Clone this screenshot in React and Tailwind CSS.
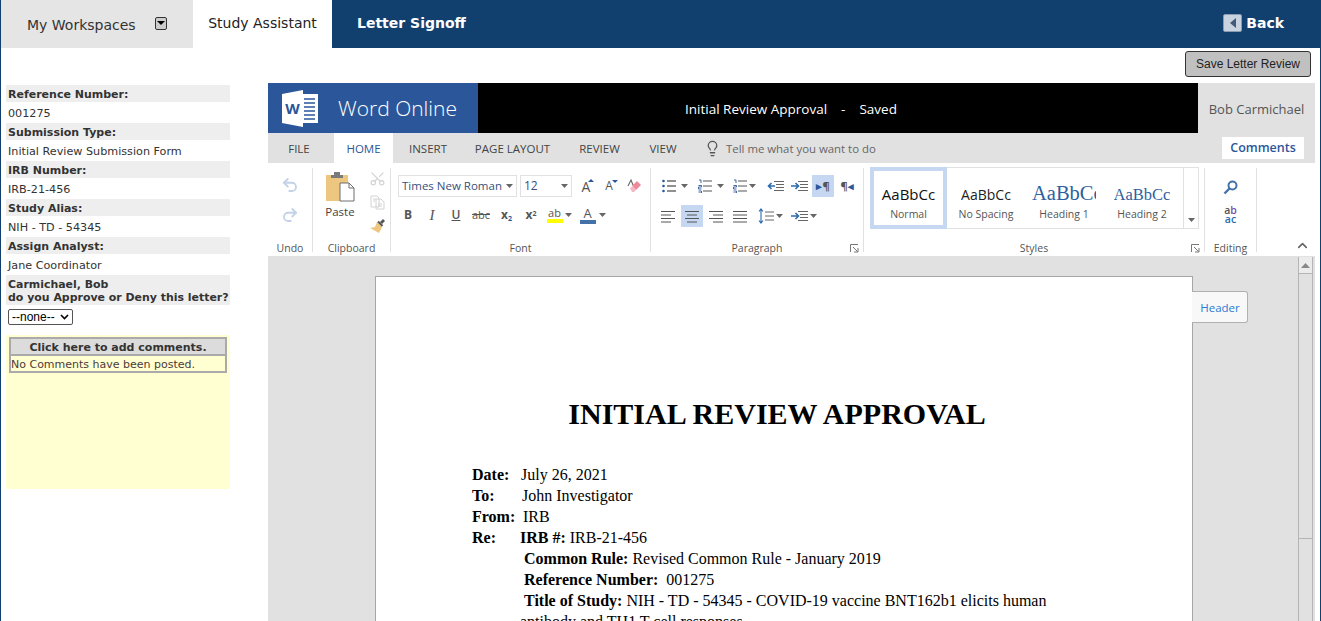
import React from 'react';
import { Lightbulb, Scissors, Undo2, Redo2, ChevronUp } from 'lucide-react';

const UI = "font-['Open_Sans',sans-serif]";

const studyInfo = [
  { label: 'Reference Number:', value: '001275' },
  { label: 'Submission Type:', value: 'Initial Review Submission Form' },
  { label: 'IRB Number:', value: 'IRB-21-456' },
  { label: 'Study Alias:', value: 'NIH - TD - 54345' },
  { label: 'Assign Analyst:', value: 'Jane Coordinator' },
];

const Caret = ({ className = '' }) => (
  <svg width="7" height="4" viewBox="0 0 7 4" className={className}><path d="M0 0h7L3.5 4z" fill="#666" /></svg>
);

// four horizontal strokes, used by every align button
const Lines = ({ widths, align = 'left', color = '#555', x = 0 }) => (
  <>
    {widths.map((w, i) => {
      const start = align === 'left' ? x : align === 'right' ? x + 14 - w : x + (14 - w) / 2;
      return <path key={i} d={`M${start} ${2.5 + i * 3.5}h${w}`} stroke={color} strokeWidth="1" />;
    })}
  </>
);

const AlignIcon = ({ widths, align }) => (
  <svg width="14" height="14" viewBox="0 0 14 14"><Lines widths={widths} align={align} /></svg>
);

const ParaCell = ({ width, active, className = '', children }) => (
  <div className={`h-[22px] flex items-center justify-center shrink-0 ${width} ${active ? 'bg-[#c5d7f1]' : ''} ${className}`}>
    {children}
  </div>
);

const ListIcon = ({ kind }) => (
  <svg width="15" height="14" viewBox="0 0 15 14">
    {kind === 'bullet' && <><circle cx="1.5" cy="2" r="1.3" fill="#2b579a" /><circle cx="1.5" cy="7" r="1.3" fill="#2b579a" /><circle cx="1.5" cy="12" r="1.3" fill="#2b579a" /></>}
    {kind !== 'bullet' && <><path d="M1 1h2v3M0.5 6.5h3v1.5h-3v2h3M0.5 12h3v2h-3" fill="none" stroke="#2b579a" strokeWidth=".9" /></>}
    <path d="M5 2h9M5 7h9M5 12h9" stroke={kind === 'bullet' ? '#222' : '#555'} strokeWidth="1" />
  </svg>
);

const IndentIcon = ({ out }) => (
  <svg width="17" height="12" viewBox="0 0 17 12">
    <path d="M7 1.5h10M9 4.5h8M9 7.5h8M7 10.5h10" stroke="#666" strokeWidth="1" />
    {out ? <path d="M8 6H2M4.5 3 1.5 6l3 3" fill="none" stroke="#2b6cb0" strokeWidth="1.6" /> : <path d="M0 6h7M4.5 3l3 3-3 3" fill="none" stroke="#2b6cb0" strokeWidth="1.6" />}
  </svg>
);

const RibbonGroup = ({ width, label, launcher, children }) => (
  <div className={`${width} mt-[5px] h-[84px] border-r border-[#e1e1e1] flex flex-col shrink-0`}>
    <div className="h-[73px]">{children}</div>
    <div className="h-[11px] relative text-center text-[10.5px] leading-[14px] text-[#555]">
      {label}
      {launcher && (
        <svg width="9" height="9" viewBox="0 0 9 9" className="absolute right-[4px] top-[3px]">
          <path d="M.5 8V.5H8M3 3l4.5 4.5M4 8h4V4" fill="none" stroke="#777" strokeWidth="1" />
        </svg>
      )}
    </div>
  </div>
);

const StyleSample = ({ className, sample, name }) => (
  <div className="w-[78px] h-full flex flex-col items-center overflow-hidden shrink-0">
    <div className={`h-[37px] flex items-end overflow-hidden whitespace-nowrap ${className}`}>{sample}</div>
    <div className="mt-[2px] text-[10.5px] leading-[14px] text-[#555]">{name}</div>
  </div>
);

const FontButton = ({ width, children, className = '' }) => (
  <div className={`${width} h-[22px] flex items-center justify-center shrink-0 text-[#555] ${className}`}>{children}</div>
);

const Ribbon = () => (
  <div className={`h-[93px] bg-white flex ${UI}`}>
    <RibbonGroup width="w-[45px]" label="Undo">
      <div className="flex flex-col items-center pt-[8px] gap-[12px]">
        <Undo2 size={18} color="#c3d2e6" strokeWidth={2.4} />
        <Redo2 size={18} color="#c3d2e6" strokeWidth={2.4} />
      </div>
    </RibbonGroup>

    <RibbonGroup width="w-[78px]" label="Clipboard">
      <div className="flex pl-[11px] pt-[3px]">
        <div className="w-[32px] flex flex-col items-center">
          <svg width="30" height="31" viewBox="0 0 30 31">
            <path d="M1 4h22v26H1z" fill="#edc77f" />
            <path d="M9 4V1h6v3h3v3H6V4z" fill="#7a7a7a" />
            <path d="M15 12h9l5 5v13H15z" fill="#fff" stroke="#6e6e6e" strokeWidth="1" />
            <path d="M24 12v5h5" fill="none" stroke="#6e6e6e" strokeWidth="1" />
          </svg>
          <span className="mt-[2px] text-[11.5px] leading-[15px] text-[#444]">Paste</span>
        </div>
        <div className="ml-[13px] -mt-[1px] flex flex-col items-center gap-[8px]">
          <Scissors size={17} color="#d2d2d2" strokeWidth={1.6} className="-rotate-90" />
          <svg width="15" height="15" viewBox="0 0 15 15"><path d="M1 1h6l2 2v9H1zM6 4h5l3 3v7H6z" fill="#fff" stroke="#d2d2d2" /><path d="M3 4h3M3 6h2M8 9h4M8 11h4" stroke="#d2d2d2" /></svg>
          <svg width="16" height="16" viewBox="0 0 16 16"><path d="M10 4l3-3 2 2-3 3z" fill="#555" /><path d="M7 4l5 5-3 6-9-5 5-1z" fill="#edc77f" /><path d="M8 3.5l4.5 4.5" stroke="#555" strokeWidth="2" /></svg>
        </div>
      </div>
    </RibbonGroup>

    <RibbonGroup width="w-[260px]" label="Font">
      <div className="pl-[5px] pt-[7px]">
        <div className="flex items-center h-[22px]">
          <div className="ml-[2px] w-[119px] h-[22px] border border-[#e1e1e1] flex items-center justify-between px-[3px] text-[12px] text-[#2b579a]">
            <span className="whitespace-nowrap text-[11.5px] text-[#37517a]">Times New Roman</span><Caret />
          </div>
          <div className="ml-[3px] w-[52px] h-[22px] border border-[#e1e1e1] flex items-center justify-between px-[3px] text-[12px] text-[#37517a]">
            <span>12</span><Caret />
          </div>
          <FontButton width="w-[24px] ml-[2px]">
            <span className="text-[14px] relative">A<span className="absolute -right-[4px] top-[3px] w-0 h-0 border-x-[3px] border-x-transparent border-b-[3px] border-b-[#2b579a]" /></span>
          </FontButton>
          <FontButton width="w-[22px]">
            <span className="text-[12px] relative">A<span className="absolute -right-[5px] top-[3px] w-0 h-0 border-x-[3px] border-x-transparent border-t-[3px] border-t-[#2b579a]" /></span>
          </FontButton>
          <FontButton width="w-[24px] ml-[2px]">
            <svg width="15" height="15" viewBox="0 0 15 15"><path d="M5 7l5-5 4 4-5 5z" fill="#ec8a9c" /><path d="M3 9l3-2 3 4-2 2H5z" fill="#f4b8c4" /><path d="M1 7l3-6 2 5" fill="none" stroke="#666" strokeWidth="1.1" /></svg>
          </FontButton>
        </div>
        <div className="flex items-center h-[22px] mt-[7px]">
          <FontButton width="w-[24px]"><span className="text-[12px] font-bold">B</span></FontButton>
          <FontButton width="w-[24px]"><span className="font-['Liberation_Serif',serif] text-[15px] italic">I</span></FontButton>
          <FontButton width="w-[24px]"><span className="text-[12px] font-semibold underline">U</span></FontButton>
          <FontButton width="w-[26px]"><span className="text-[11px] line-through">abc</span></FontButton>
          <FontButton width="w-[25px]"><span className="text-[12px] font-bold">x<sub className="text-[7px] text-[#2b579a]">2</sub></span></FontButton>
          <FontButton width="w-[24px]"><span className="text-[12px] font-bold">x<sup className="text-[7px]">2</sup></span></FontButton>
          <FontButton width="w-[32px]">
            <span className="flex flex-col items-center"><span className="text-[11px] leading-[12px]">ab</span><span className="w-[16px] h-[4px] bg-[#ffff00]" /></span>
            <Caret className="ml-[2px]" />
          </FontButton>
          <FontButton width="w-[35px]">
            <span className="flex flex-col items-center"><span className="text-[13px] leading-[13px]">A</span><span className="w-[16px] h-[4px] bg-[#4472a8]" /></span>
            <Caret className="ml-[3px]" />
          </FontButton>
        </div>
      </div>
    </RibbonGroup>

    <RibbonGroup width="w-[213px]" label="Paragraph" launcher>
      <div className="pt-[7px]">
        <div className="flex items-center h-[22px]">
          <ParaCell width="w-[31px] ml-[8px]" className="gap-[4px]"><ListIcon kind="bullet" /><Caret /></ParaCell>
          <ParaCell width="w-[31px] ml-[5px]" className="gap-[4px]"><ListIcon kind="number" /><Caret /></ParaCell>
          <ParaCell width="w-[28px] ml-[4px]" className="gap-[1px]"><ListIcon kind="multi" /><Caret /></ParaCell>
          <ParaCell width="w-[22px] ml-[6px]"><IndentIcon out /></ParaCell>
          <ParaCell width="w-[22px] ml-[2px]"><IndentIcon /></ParaCell>
          <ParaCell width="w-[22px] ml-[2px]" active><span className="text-[11px] font-bold text-[#555]"><span className="text-[#2b579a]">▸</span>¶</span></ParaCell>
          <ParaCell width="w-[22px] ml-[2px]"><span className="text-[11px] font-bold text-[#555]">¶<span className="text-[#2b579a]">◂</span></span></ParaCell>
        </div>
        <div className="flex items-center h-[22px] mt-[8px]">
          <ParaCell width="w-[22px] ml-[6px]"><AlignIcon widths={[14, 10, 14, 10]} align="left" /></ParaCell>
          <ParaCell width="w-[22px] ml-[2px]" active><AlignIcon widths={[14, 10, 14, 10]} align="center" /></ParaCell>
          <ParaCell width="w-[22px] ml-[2px]"><AlignIcon widths={[14, 10, 14, 10]} align="right" /></ParaCell>
          <ParaCell width="w-[22px] ml-[2px]"><AlignIcon widths={[14, 14, 14, 14]} align="left" /></ParaCell>
          <ParaCell width="w-[30px] ml-[4px]" className="gap-[2px]">
            <svg width="16" height="16" viewBox="0 0 16 16"><path d="M3 1v14M1 3.5 3 1l2 2.5M1 12.5 3 15l2-2.5" fill="none" stroke="#2b6cb0" strokeWidth="1.1" /><path d="M7 4h9M7 8h9M7 12h9" stroke="#666" /></svg>
            <Caret />
          </ParaCell>
          <ParaCell width="w-[29px] ml-[4px]" className="gap-[2px]"><IndentIcon /><Caret /></ParaCell>
        </div>
      </div>
    </RibbonGroup>

    <RibbonGroup width="w-[341px]" label="Styles" launcher>
      <div className="ml-[6px] -mt-px w-[329px] h-[62px] border border-[#e1e1e1] flex">
        <div className="w-[77px] -ml-px -my-px border-4 border-[#c5d7f1] flex flex-col items-center shrink-0">
          <div className="h-[33px] flex items-end text-[15px] leading-[20px] text-[#111]">AaBbCc</div>
          <div className="mt-[3px] text-[10.5px] leading-[14px] text-[#555]">Normal</div>
        </div>
        <StyleSample className="text-[14px] leading-[20px] text-[#222]" sample="AaBbCc" name="No Spacing" />
        <StyleSample className="w-[64px] font-['Liberation_Serif',serif] text-[20.5px] leading-[24px] text-[#2e5f9e]" sample="AaBbCc" name="Heading 1" />
        <StyleSample className="font-['Liberation_Serif',serif] text-[16.5px] leading-[20px] text-[#2e5f9e]" sample="AaBbCc" name="Heading 2" />
        <div className="ml-auto w-[15px] border-l border-[#e1e1e1] flex items-end justify-center pb-[6px]"><Caret /></div>
      </div>
    </RibbonGroup>

    <RibbonGroup width="w-[52px]" label="Editing">
      <div className="flex flex-col items-center pt-[12px]">
        <svg width="15" height="15" viewBox="0 0 15 15"><circle cx="9.5" cy="5.5" r="4" fill="none" stroke="#4472a8" strokeWidth="2" /><path d="M6.5 8.5 1.5 13.5" stroke="#4472a8" strokeWidth="2.4" /></svg>
        <div className="mt-[11px] text-[10.5px] leading-[9px] font-semibold text-center">
          <div><span className="text-[#555]">a</span><span className="text-[#7a4fa8]">b</span></div>
          <div className="text-[#2b6cb0]">ac</div>
        </div>
      </div>
    </RibbonGroup>

    <div className="flex-1 flex items-end justify-end pr-[5px] pb-[3px]">
      <ChevronUp size={15} color="#666" strokeWidth={2.6} />
    </div>
  </div>
);

const RibbonTabs = () => (
  <div className={`h-[30px] bg-[#e1e1e1] flex items-center text-[11.5px] text-[#444] ${UI}`}>
    <div className="w-[66px] pr-[4px] pt-[2px] text-center">FILE</div>
    <div className="w-[59px] h-full pt-[2px] bg-white flex items-center justify-center text-[#2b579a]">HOME</div>
    <div className="w-[70px] pt-[2px] text-center">INSERT</div>
    <div className="w-[99px] pt-[2px] text-center">PAGE LAYOUT</div>
    <div className="w-[75px] pt-[2px] text-center">REVIEW</div>
    <div className="w-[52px] pt-[2px] text-center">VIEW</div>
    <Lightbulb size={17} color="#555" strokeWidth={1.8} className="ml-[15px]" />
    <span className="ml-[5px] pt-[2px] text-[11.4px] text-[#666] whitespace-nowrap">Tell me what you want to do</span>
    <div className="ml-auto mr-[11px] w-[82px] h-[22px] pt-[1px] bg-white flex items-center justify-center text-[12.5px] font-semibold text-[#2b579a]">Comments</div>
  </div>
);

const WordHeader = () => (
  <div className={`h-[50px] flex ${UI}`}>
    <div className="w-[210px] bg-[#2b579a] flex items-center pl-[14px]">
      <svg width="36" height="37" viewBox="0 0 36 37">
        <path d="M21 4h15v29H21z" fill="#fff" />
        <path d="M22 9h11M22 13h11M22 17h11M22 21h11M22 25h11M22 29h11" stroke="#2b579a" strokeWidth="1.6" />
        <path d="M0 4 21 0v37L0 33z" fill="#fff" />
        <text x="10.5" y="24" textAnchor="middle" fontSize="15" fontWeight="700" fill="#2b579a" fontFamily="Open Sans">W</text>
      </svg>
      <span className="ml-[20px] pt-[2px] text-[21px] font-light text-white whitespace-nowrap">Word Online</span>
    </div>
    <div className="w-[720px] bg-black flex items-center pl-[207px] pt-[3px] text-[13.5px] text-white whitespace-pre">
      {'Initial Review Approval    -    Saved'}
    </div>
    <div className="flex-1 bg-[#e1e1e1] flex items-center justify-center pt-[3px] text-[13px] text-[#555]">Bob Carmichael</div>
  </div>
);

const Letter = () => (
  <div className="relative ml-[107px] mt-[20px] w-[818px] h-[500px] bg-white border border-[#a6a6a6] font-['Liberation_Serif',serif] text-black">
    <div className={`absolute -right-[56px] top-[14px] w-[56px] h-[32px] pt-px pl-px bg-[#f8f8f8] border border-l-0 border-[#b0b0b0] rounded-r-[3px] flex items-center justify-center text-[11.5px] text-[#2a7bd4] ${UI}`}>
      Header
    </div>
    <h1 className="pt-[119px] pr-[14px] text-center text-[30px] leading-[36px] font-bold">INITIAL REVIEW APPROVAL</h1>
    <div className="mt-[32px] pl-[96px] pr-[140px] text-[16px] leading-[21px]">
      <p><b className="inline-block w-[49px]">Date:</b>July 26, 2021</p>
      <p><b className="inline-block w-[50px]">To:</b>John Investigator</p>
      <p><b className="inline-block w-[51px]">From:</b>IRB</p>
      <p><b className="inline-block w-[48px]">Re:</b><b>IRB #:</b> IRB-21-456</p>
      <p className="pl-[52px]"><b>Common Rule:</b> Revised Common Rule - January 2019</p>
      <p className="pl-[52px]"><b>Reference Number:</b>&nbsp; 001275</p>
      <p className="pl-[48px]">
        <b className="pl-[4px]">Title of Study:</b> NIH - TD - 54345 - COVID-19 vaccine BNT162b1 elicits human antibody and TH1 T cell responses
      </p>
    </div>
  </div>
);

const Scrollbar = () => (
  <div className="w-[15px] mt-px flex flex-col border-x border-[#b5b5b5] shrink-0">
    <div className="h-[17px] bg-[#ececec] border-b border-[#b5b5b5] flex items-center justify-center">
      <svg width="9" height="5" viewBox="0 0 9 5"><path d="M0 5h9L4.5 0z" fill="#888" /></svg>
    </div>
    <div className="h-[265px] bg-[#e1e1e1] border-b border-[#b5b5b5]" />
  </div>
);

export default function App() {
  return (
    <div className="h-screen w-full overflow-hidden bg-white border-x border-[#11406f] font-['DejaVu_Sans',sans-serif]">
      {/* top nav */}
      <div className="h-12 bg-[#11406f] flex items-center">
        <div className="w-[192px] h-full bg-[#e5e5e5] flex items-center pl-[26px] text-[14px] text-[#333]">
          <span className="mt-[2px]">My Workspaces</span>
          <span className="ml-[19px] -mt-[2px] w-[12px] h-[13px] border border-[#333] rounded-[2px] bg-[#ccc] flex items-center justify-center">
            <span className="w-0 h-0 border-x-[4px] border-x-transparent border-t-[4px] border-t-black" />
          </span>
        </div>
        <div className="w-[139px] h-full bg-white flex items-center justify-center text-[14px] text-[#222]">
          <span className="-mt-[2px]">Study Assistant</span>
        </div>
        <div className="ml-[25px] -mt-[2px] text-[14px] font-bold text-white">Letter Signoff</div>
        <div className="ml-auto mr-[36px] -mt-[2px] flex items-center gap-[4px] text-[14px] font-bold text-white">
          <span className="w-[19px] h-[18px] bg-[#c9d3e0] border border-[#8a9ab0] rounded-[2px] flex items-center justify-center">
            <span className="w-0 h-0 border-y-[5px] border-y-transparent border-r-[6px] border-r-[#445a78]" />
          </span>
          Back
        </div>
      </div>

      <div className="flex">
        {/* study details */}
        <div className="w-[267px] pl-[5px] pt-[37px] shrink-0">
          <div className="w-[224px] text-[11px] text-[#333]">
            {studyInfo.map((row) => (
              <div key={row.label}>
                <div className="h-[17px] pt-px leading-[17px] bg-[#eeeeee] pl-[2px] font-bold whitespace-nowrap">{row.label}</div>
                <div className="h-[21px] pt-px leading-[21px] pl-[2px] text-[11.2px] whitespace-nowrap">{row.value}</div>
              </div>
            ))}
            <div className="h-[30px] bg-[#eeeeee] pl-[2px] font-bold text-[10.95px] leading-[13px] pt-[3px] whitespace-nowrap">
              Carmichael, Bob<br />do you Approve or Deny this letter?
            </div>
            <div className="pl-[2px] pt-[4px] h-[30px]">
              <div className="w-[65px] h-[16px] border border-[#555] rounded-[2px] bg-white flex items-center justify-between px-[3px] font-['Liberation_Sans',sans-serif] text-[12px] text-black">
                <span>--none--</span>
                <svg width="9" height="6" viewBox="0 0 9 6"><path d="M1 1l3.5 3.5L8 1" fill="none" stroke="#000" strokeWidth="1.6" /></svg>
              </div>
            </div>
            <div className="h-[154px] bg-[#ffffd2] pt-[2px] px-[3px]">
              <div className="border-2 border-[#aaaaaa]">
                <div className="h-[17px] pt-px leading-[15px] bg-[#dcdcdc] border-b-2 border-[#aaaaaa] text-center font-bold">Click here to add comments.</div>
                <div className="h-[15px] pt-px leading-[15px] text-[#4d3a3a] whitespace-nowrap">No Comments have been posted.</div>
              </div>
            </div>
          </div>
        </div>

        {/* word frame */}
        <div className="w-[1047px] mr-[5px] shrink-0">
          <div className="h-[35px] flex justify-end pt-[3px] pr-[4px]">
            <div className="w-[126px] h-[26px] bg-[#c0c0c0] border border-[#333] rounded-[3px] flex items-center justify-center font-['Liberation_Sans',sans-serif] text-[12px] text-[#222]">
              Save Letter Review
            </div>
          </div>
          <WordHeader />
          <RibbonTabs />
          <Ribbon />
          <div className="h-[400px] bg-[#e1e1e1] flex">
            <div className="w-[1030px] shrink-0"><Letter /></div>
            <Scrollbar />
          </div>
        </div>
      </div>
    </div>
  );
}
